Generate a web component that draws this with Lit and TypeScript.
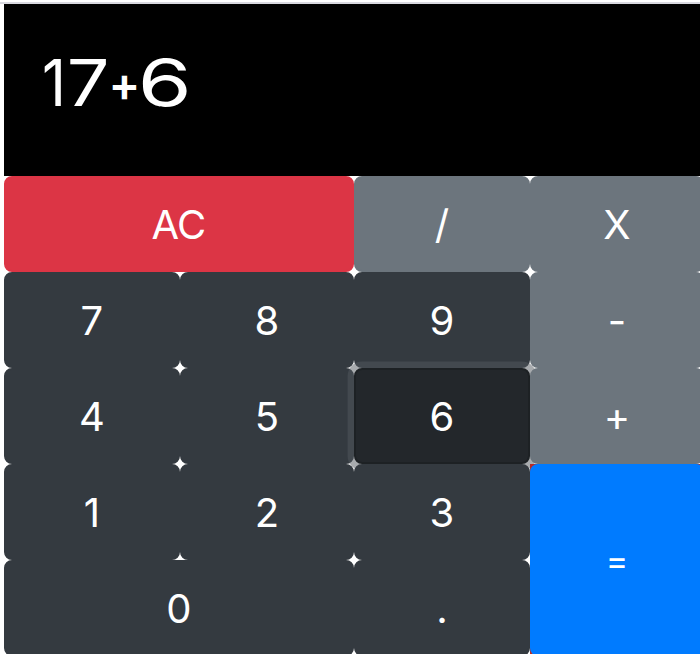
import { LitElement, html, css } from "lit";
import { customElement } from "lit/decorators.js";
import { classMap } from "lit/directives/class-map.js";

interface Key {
  label: string;
  tone: "dark" | "gray" | "red" | "blue";
  span?: "wide" | "tall";
  active?: boolean;
}

const KEYS: Key[] = [
  { label: "AC", tone: "red", span: "wide" },
  { label: "/", tone: "gray" },
  { label: "X", tone: "gray" },
  { label: "7", tone: "dark" },
  { label: "8", tone: "dark" },
  { label: "9", tone: "dark" },
  { label: "-", tone: "gray" },
  { label: "4", tone: "dark" },
  { label: "5", tone: "dark" },
  { label: "6", tone: "dark", active: true },
  { label: "+", tone: "gray" },
  { label: "1", tone: "dark" },
  { label: "2", tone: "dark" },
  { label: "3", tone: "dark" },
  { label: "=", tone: "blue", span: "tall" },
  { label: "0", tone: "dark", span: "wide" },
  { label: ".", tone: "dark" },
];

@customElement("app-root")
export class AppRoot extends LitElement {
  static styles = css`
    :host {
      display: block;
      height: 654px;
      overflow: hidden;
      background: #fff;
      font-family: Inter, "Liberation Sans", sans-serif;
      color: #fff;
    }
    .frame {
      margin-top: 2px;
      border-top: 2px solid #d9d9e0;
      padding-left: 4px;
    }
    .display {
      box-sizing: border-box;
      width: 700px;
      height: 172px;
      padding: 40px 40px 0;
      background: #000;
      font-size: 64px;
      font-weight: 400;
      line-height: 78px;
      display: flex;
    }
    .char {
      display: flex;
      justify-content: center;
      flex: none;
    }
    .one { width: 21px; }
    .seven { width: 47px; }
    .plus { width: 25px; }
    .six { width: 56px; }
    .glyph { display: block; }
    .one .glyph { transform: scaleX(0.92); }
    .seven .glyph { transform: scaleX(1.18); }
    .plus .glyph { transform: translateY(-6px) scale(0.74); font-weight: 600; }
    .six .glyph { transform: scaleX(1.36); }
    .keys {
      display: grid;
      width: 700px;
      grid-template-columns: 176px 174px 176px 174px;
      grid-auto-rows: 96px;
    }
    .cell { display: flex; }
    .wide { grid-column: span 2; }
    .tall { grid-row: span 2; background: #b52b27; }
    .key {
      flex: 1;
      box-sizing: border-box;
      margin: 0;
      padding: 1px 1px 0 0;
      border: 2px solid transparent;
      border-radius: 8px;
      font: 400 40px/60px Inter, "Liberation Sans", sans-serif;
      letter-spacing: -0.8px;
      color: #fff;
      outline: none;
    }
    .dark { background: #343a40; border-color: #343a40; }
    .gray { background: #6c757d; border-color: #6c757d; }
    .red { background: #dc3545; border-color: #dc3545; }
    .blue { background: #007bff; border-color: #007bff; font-size: 34px; }
    .active {
      background: #23272b;
      border-color: #1d2124;
      box-shadow: 0 0 0 6.4px rgba(82, 88, 93, 0.5);
    }
  `;

  private renderKey(k: Key) {
    return html`<div class=${classMap({ cell: true, wide: k.span === "wide", tall: k.span === "tall" })}>
      <button class=${classMap({ key: true, [k.tone]: true, active: !!k.active })}>${k.label}</button>
    </div>`;
  }

  render() {
    return html`
      <div class="frame">
        <div class="display">
          <span class="char one"><span class="glyph">1</span></span>
          <span class="char seven"><span class="glyph">7</span></span>
          <span class="char plus"><span class="glyph">+</span></span>
          <span class="char six"><span class="glyph">6</span></span>
        </div>
        <div class="keys">${KEYS.map((k) => this.renderKey(k))}</div>
      </div>
    `;
  }
}
